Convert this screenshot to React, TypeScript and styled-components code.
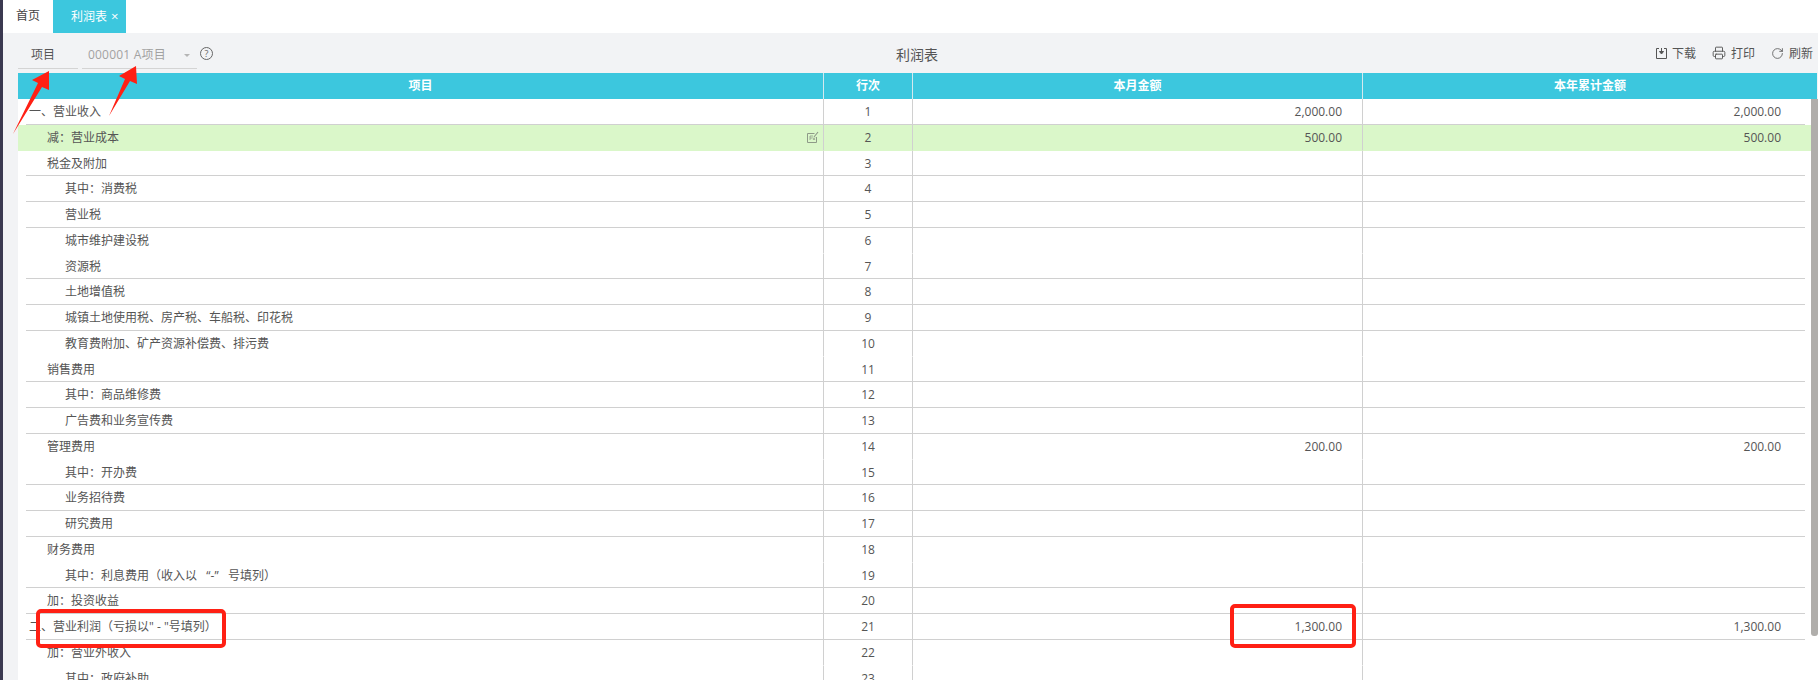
import React from "react";
import styled, { createGlobalStyle } from "styled-components";
import { Printer, RotateCw } from "lucide-react";

const GlobalStyle = createGlobalStyle`
  html, body { margin: 0; padding: 0; background: #fff; overflow: hidden; }
  body { font-family: "Open Sans", "Noto Sans CJK SC", sans-serif; font-size: 12px; color: #555; }
`;

const COLUMNS = "806px 89px 450px 1fr";

const Page = styled.div`
  display: flex;
  width: 1818px;
  height: 680px;
  overflow: hidden;
  position: relative;
`;

const SideStrip = styled.div`
  width: 3px;
  background: #3b3950;
  flex: none;
`;

const Main = styled.div`
  flex: 1;
  display: flex;
  flex-direction: column;
  min-width: 0;
`;

const TabBar = styled.div`
  height: 33px;
  flex: none;
  display: flex;
  align-items: stretch;
  padding-left: 13px;
  box-sizing: border-box;
  background: #fff;
`;

const HomeTab = styled.div`
  line-height: 32px;
  font-size: 12px;
  color: #444;
  width: 37px;
`;

const ActiveTab = styled.div`
  width: 73px;
  background: #3cc7de;
  color: #fff;
  line-height: 33px;
  padding-left: 18px;
  box-sizing: border-box;
  font-size: 12px;
`;

const TabClose = styled.span`
  margin-left: 4px;
  font-size: 13px;
`;

const Toolbar = styled.div`
  height: 40px;
  flex: none;
  background: #f2f3f5;
  padding-left: 15px;
  display: grid;
  grid-template-columns: 1fr auto 1fr;
  align-items: center;
`;

const ToolLeft = styled.div`
  display: flex;
  align-items: center;
`;

const FieldLabel = styled.div`
  width: 60px;
  height: 26px;
  margin-top: 6px;
  line-height: 24px;
  padding-left: 13px;
  box-sizing: border-box;
  border-bottom: 1px solid #d4d4d4;
  color: #555;
`;

const FieldSelect = styled.div`
  width: 115px;
  height: 26px;
  margin: 6px 0 0 4px;
  line-height: 24px;
  padding-left: 6px;
  box-sizing: border-box;
  border-bottom: 1px solid #d4d4d4;
  color: #a2a2a2;
  letter-spacing: 0.2px;
  position: relative;
`;

const Caret = styled.span`
  position: absolute;
  right: 7px;
  top: 11px;
  border-left: 3px solid transparent;
  border-right: 3px solid transparent;
  border-top: 3px solid #b5b5b5;
`;

const HelpIcon = styled.span`
  width: 11px;
  height: 11px;
  margin: 0 0 0 3px;
  border: 1px solid #666;
  border-radius: 50%;
  color: #666;
  font-size: 9px;
  line-height: 11px;
  text-align: center;
`;

const ToolTitle = styled.div`
  font-size: 14px;
  color: #555;
  padding: 1px 2px 0 0;
`;

const ToolRight = styled.div`
  display: flex;
  justify-content: flex-end;
  gap: 16px;
  padding-right: 5px;
`;

const ToolButton = styled.div`
  display: flex;
  align-items: center;
  gap: 5px;
  color: #555;
  svg { display: block; flex: none; }
`;

const TableArea = styled.div`
  flex: 1;
  display: flex;
  flex-direction: column;
  min-height: 0;
  background: #f2f3f5;
  padding-left: 15px;
`;

const HeaderRow = styled.div`
  height: 26px;
  flex: none;
  display: grid;
  grid-template-columns: ${COLUMNS};
  background: #3cc7de;
  margin-right: 1px;
`;

const HeaderCell = styled.div`
  color: #fff;
  font-weight: 700;
  text-align: center;
  line-height: 25px;
  border-right: 1px solid #d4e9ee;
  &:last-child { border-right: none; }
`;

const Body = styled.div`
  flex: 1;
  display: flex;
  min-height: 0;
  overflow: hidden;
  background: #fff;
`;

const Rows = styled.div`
  flex: 1;
  min-width: 0;
`;

const ScrollTrack = styled.div`
  width: 7px;
  flex: none;
  background: #fff;
`;

const ScrollThumb = styled.div`
  height: 537px;
  background: #b0aeab;
  border-radius: 0 0 3px 3px;
`;

const Row = styled.div<{ $active?: boolean }>`
  display: grid;
  grid-template-columns: ${COLUMNS};
  grid-template-rows: 25.75px;
  background: ${(p) => (p.$active ? "#daf7c9" : "#fff")};
  color: #555;
`;

const LabelCell = styled.div<{ $lined: boolean; $indent: number }>`
  box-sizing: border-box;
  margin-left: 8px;
  padding-left: ${(p) => p.$indent}px;
  border-bottom: 1px solid ${(p) => (p.$lined ? "#d0d0d0" : "transparent")};
  border-right: 1px solid #d0d0d0;
  line-height: 26px;
  display: flex;
  justify-content: space-between;
  align-items: flex-start;
  white-space: nowrap;
  min-width: 0;
`;

const EditIcon = styled.svg`
  margin-right: 4px;
  flex: none;
  align-self: center;
`;

const LineCell = styled.div<{ $lined: boolean }>`
  box-sizing: border-box;
  border-bottom: 1px solid ${(p) => (p.$lined ? "#d0d0d0" : "transparent")};
  border-right: 1px solid #d0d0d0;
  text-align: center;
  line-height: 26px;
`;

const AmountCell = styled.div<{ $lined: boolean; $pad: number }>`
  box-sizing: border-box;
  border-bottom: 1px solid ${(p) => (p.$lined ? "#d0d0d0" : "transparent")};
  border-right: 1px solid #d0d0d0;
  text-align: right;
  padding-right: ${(p) => p.$pad}px;
  line-height: 26px;
`;

const LastCell = styled(AmountCell)`
  border-right: none;
  margin-right: 6px;
`;

const RedBox = styled.div<{ $left: number; $top: number; $w: number; $h: number }>`
  position: absolute;
  left: ${(p) => p.$left}px;
  top: ${(p) => p.$top}px;
  width: ${(p) => p.$w}px;
  height: ${(p) => p.$h}px;
  box-sizing: border-box;
  border: 4px solid #ff2014;
  border-radius: 5px;
`;

const ArrowLayer = styled.svg`
  position: absolute;
  left: 0;
  top: 0;
  pointer-events: none;
`;

type Item = { label: string; indent: number; month?: string; year?: string };

const items: Item[] = [
  { label: "一、营业收入", indent: 3, month: "2,000.00", year: "2,000.00" },
  { label: "减：营业成本", indent: 21, month: "500.00", year: "500.00" },
  { label: "税金及附加", indent: 21 },
  { label: "其中：消费税", indent: 39 },
  { label: "营业税", indent: 39 },
  { label: "城市维护建设税", indent: 39 },
  { label: "资源税", indent: 39 },
  { label: "土地增值税", indent: 39 },
  { label: "城镇土地使用税、房产税、车船税、印花税", indent: 39 },
  { label: "教育费附加、矿产资源补偿费、排污费", indent: 39 },
  { label: "销售费用", indent: 21 },
  { label: "其中：商品维修费", indent: 39 },
  { label: "广告费和业务宣传费", indent: 39 },
  { label: "管理费用", indent: 21, month: "200.00", year: "200.00" },
  { label: "其中：开办费", indent: 39 },
  { label: "业务招待费", indent: 39 },
  { label: "研究费用", indent: 39 },
  { label: "财务费用", indent: 21 },
  { label: "其中：利息费用（收入以\u00a0\u00a0\u00a0“-”\u00a0\u00a0\u00a0号填列）", indent: 39 },
  { label: "加：投资收益", indent: 21 },
  { label: "二、营业利润（亏损以\" - \"号填列）", indent: 3, month: "1,300.00", year: "1,300.00" },
  { label: "加：营业外收入", indent: 21 },
  { label: "其中：政府补助", indent: 39 },
];

function App() {
  return (
    <Page>
      <GlobalStyle />
      <SideStrip />
      <Main>
        <TabBar>
          <HomeTab>首页</HomeTab>
          <ActiveTab>
            利润表<TabClose>×</TabClose>
          </ActiveTab>
        </TabBar>
        <Toolbar>
          <ToolLeft>
            <FieldLabel>项目</FieldLabel>
            <FieldSelect>
              000001 A项目
              <Caret />
            </FieldSelect>
            <HelpIcon>?</HelpIcon>
          </ToolLeft>
          <ToolTitle>利润表</ToolTitle>
          <ToolRight>
            <ToolButton>
              <svg width="11" height="12" viewBox="0 0 11 12" fill="none" stroke="#555">
                <path d="M3 1.5H.5v10h10v-10H8" />
                <path d="M5.5 1v5" />
                <path d="M3.5 4.5l2 2.5 2-2.5z" fill="#555" />
              </svg>
              下载
            </ToolButton>
            <ToolButton>
              <Printer size={14} strokeWidth={1.6} color="#555" />
              打印
            </ToolButton>
            <ToolButton>
              <RotateCw size={13} strokeWidth={1.5} color="#555" />
              刷新
            </ToolButton>
          </ToolRight>
        </Toolbar>
        <TableArea>
          <HeaderRow>
            <HeaderCell>项目</HeaderCell>
            <HeaderCell>行次</HeaderCell>
            <HeaderCell>本月金额</HeaderCell>
            <HeaderCell>本年累计金额</HeaderCell>
          </HeaderRow>
          <Body>
            <Rows>
              {items.map((item, i) => {
                // every fourth rule is missing in the table
                const lined = i % 4 !== 1;
                return (
                  <Row key={item.label} $active={i === 1}>
                    <LabelCell $lined={lined} $indent={item.indent}>
                      {item.label}
                      {i === 1 && (
                        <EditIcon width="12" height="12" viewBox="0 0 12 12" fill="none" stroke="#8e9a88">
                          <path d="M9.500 6v5.500H.5v-9h7" />
                          <path d="M3 9V5h3M3 7h2.500M6 6.500l2 2.500M8 6.500L6 9" strokeWidth=".8" />
                          <path d="M7 6l4-5" strokeWidth="1.2" />
                        </EditIcon>
                      )}
                    </LabelCell>
                    <LineCell $lined={lined}>{i + 1}</LineCell>
                    <AmountCell $lined={lined} $pad={20}>
                      {item.month}
                    </AmountCell>
                    <LastCell $lined={lined} $pad={24}>
                      {item.year}
                    </LastCell>
                  </Row>
                );
              })}
            </Rows>
            <ScrollTrack>
              <ScrollThumb />
            </ScrollTrack>
          </Body>
        </TableArea>
      </Main>
      <RedBox $left={36} $top={609} $w={190} $h={39} />
      <RedBox $left={1230} $top={604} $w={126} $h={44} />
      <ArrowLayer width="1818" height="680" viewBox="0 0 1818 680">
        <path d="M49 71L32 80L38 83L13 134L42 87L49 90Z" fill="#ff2014" />
        <path d="M136 66L119 76L125 79L109 116L130 81L137 84Z" fill="#ff2014" />
      </ArrowLayer>
    </Page>
  );
}

export default App;
